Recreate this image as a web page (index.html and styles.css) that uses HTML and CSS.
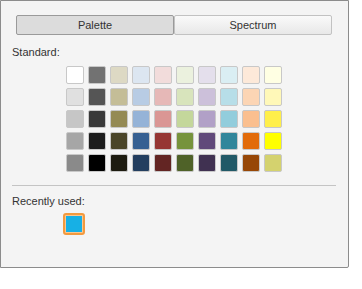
FILE: index.html
```html
<!DOCTYPE html>
<html lang="en">
<head>
    <meta charset="UTF-8">
    <title>Color picker</title>
    <link rel="stylesheet" href="styles.css">
</head>
<body>
    <div class="panel">
        <div class="tabs">
            <button class="tab active">Palette</button>
            <button class="tab">Spectrum</button>
        </div>

        <div class="label first">Standard:</div>
        <div class="grid" id="grid"></div>

        <hr class="sep">

        <div class="label">Recently used:</div>
        <div class="recent">
            <div class="recent-inner"></div>
        </div>
    </div>

    <script>
        let colors = [
            "#ffffff", "#727272", "#ddd9c4", "#dce6f1", "#f2dcdb", "#ebf1de", "#e4dfec", "#daeef3", "#fde9d9", "#ffffe3",
            "#e0e0e0", "#555555", "#c4bd97", "#b8cce4", "#e6b8b7", "#d8e4bc", "#ccc0da", "#b7dee8", "#fcd5b4", "#fff8b8",
            "#c6c6c6", "#393939", "#948a54", "#95b3d7", "#da9694", "#c4d79b", "#b1a0c7", "#92cddc", "#fabf8f", "#ffef4a",
            "#a6a6a6", "#1c1c1c", "#4a4529", "#366092", "#963634", "#76933c", "#60497a", "#31869b", "#e26b0a", "#ffff00",
            "#8a8a8a", "#000000", "#1d1b10", "#233e5f", "#632523", "#4f6228", "#403151", "#215967", "#974706", "#d4d26e"
        ];

        let grid = document.getElementById("grid");
        colors.forEach(c => {
            grid.innerHTML += `<div class="swatch" style="background:${c}"></div>`;
        });
    </script>
</body>
</html>
```

FILE: styles.css
```css
body {
    margin: 0;
    background: #ffffff;
    font-family: 'Liberation Sans', Arial, sans-serif;
    font-size: 11px;
    color: #333;
}
.panel {
    box-sizing: border-box;
    width: 349px;
    height: 268px;
    background: #f4f4f4;
    border: 1px solid #8c8c8c;
    border-radius: 0 0 2px 0;
    padding: 14px 12px 0 11px;
}
.tabs {
    display: flex;
    margin: 0 4px;
}
.tab {
    flex: 1;
    height: 20px;
    padding: 0;
    font-family: inherit;
    font-size: 11px;
    color: #333;
    border: 1px solid #c2c2c2;
    border-radius: 2px;
    background: linear-gradient(#fafafa, #e8e8e8);
}
.tab.active {
    background: #dcdcdc;
    border-color: #9a9a9a;
}
.label {
    line-height: 14px;
    margin-top: 8px;
}
.label.first {
    margin-top: 10px;
}
.grid {
    display: grid;
    grid-template-columns: repeat(10, 18px);
    grid-auto-rows: 18px;
    gap: 4px;
    margin: 7px 0 0 54px;
}
.swatch {
    box-sizing: border-box;
    border: 1px solid #c8c8c8;
    border-radius: 2px;
}
.sep {
    margin: 13px 0 0;
    border: none;
    border-top: 1px solid #c4c4c4;
}
.recent {
    box-sizing: border-box;
    width: 22px;
    height: 22px;
    margin: 5px 0 0 51px;
    border: 2px solid #f39a3e;
    border-radius: 3px;
    background: #fbc68f;
    padding: 1px;
}
.recent-inner {
    width: 16px;
    height: 16px;
    background: #17b0e5;
}
```
